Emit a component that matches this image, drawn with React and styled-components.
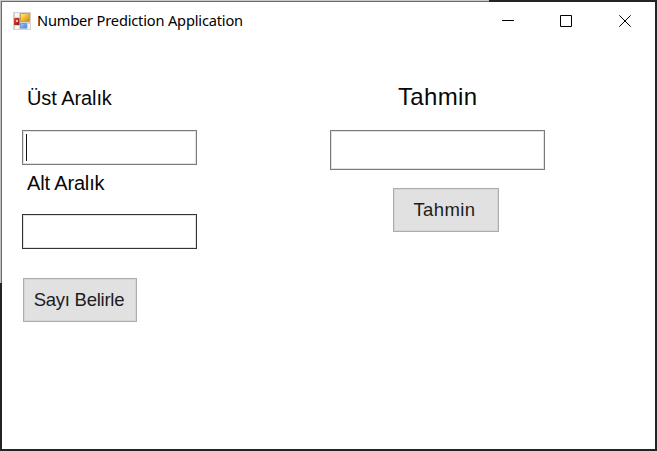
import React from "react";
import styled, { createGlobalStyle } from "styled-components";

const Global = createGlobalStyle`
  * { box-sizing: border-box; }
  body { margin: 0; overflow: hidden; background: #fff; font-kerning: none; }
`;

const Frame = styled.div`
  width: 657px;
  height: 451px;
  padding: 2px;
  display: flex;
  flex-direction: column;
  background:
    linear-gradient(#6b6b6b, #6b6b6b) 1px 1px / 488px 1px no-repeat,
    linear-gradient(#6b6b6b, #6b6b6b) 1px 1px / 1px 282px no-repeat,
    linear-gradient(#c9c9c9, #c9c9c9) 0 0 / 489px 1px no-repeat,
    linear-gradient(#c0c0c0, #c0c0c0) 0 0 / 1px 283px no-repeat,
    #242424;
`;

const TitleBar = styled.header`
  display: flex;
  align-items: center;
  height: 38px;
  padding-left: 11px;
  background: #fff;
`;

const Title = styled.h1`
  flex: 1;
  margin: 0 0 2px 6px;
  font: 400 14.6px/20px "Noto Sans", sans-serif;
  letter-spacing: -0.17px;
  color: #000;
  white-space: nowrap;
`;

const CaptionButton = styled.button`
  display: grid;
  place-items: center;
  width: ${(p) => p.$width || 58}px;
  height: 38px;
  padding: 0;
  border: 0;
  background: transparent;
`;

const Client = styled.main`
  flex: 1;
  display: grid;
  grid-template-columns: 308px 215px;
  align-items: start;
  padding: 45px 0 0 20px;
  background: #fff;
`;

const Column = styled.section`
  display: flex;
  flex-direction: column;
  align-items: flex-start;
`;

const Label = styled.label`
  height: ${(p) => p.$height}px;
  margin: ${(p) => p.$top || 0}px 0 0 ${(p) => p.$indent}px;
  font: 400 ${(p) => p.$size || 20}px/${(p) => p.$line || 26}px "Liberation Sans", sans-serif;
  letter-spacing: ${(p) => p.$spacing || 0}px;
  color: #080808;
  white-space: nowrap;
`;

const Field = styled.div`
  display: flex;
  align-items: center;
  width: ${(p) => p.$width}px;
  height: ${(p) => p.$height}px;
  padding-left: 3px;
  border: 1px solid ${(p) => p.$border};
  box-shadow: inset 0 0 0 1px #e2e2e2;
  background: #fff;
`;

const Caret = styled.span`
  width: 1px;
  height: 27px;
  background: #111;
`;

const PushButton = styled.button`
  width: ${(p) => p.$width}px;
  height: 44px;
  margin: ${(p) => p.$margin};
  padding: 0 ${(p) => p.$nudge}px 0 0;
  border: 1px solid #adadad;
  box-shadow: inset 0 0 0 1px #d6d6d6;
  background: #e1e1e1;
  color: #1c1c1c;
  font: 400 18.5px/24px "Liberation Sans", sans-serif;
  letter-spacing: ${(p) => p.$spacing}px;
  white-space: nowrap;
`;

const AppIcon = () => (
  <svg width="18" height="18" viewBox="0 0 18 18">
    <defs>
      <linearGradient id="gold" x2="1" y2="1">
        <stop stopColor="#fff0a0" /><stop offset=".5" stopColor="#f0bd32" /><stop offset="1" stopColor="#bd850c" />
      </linearGradient>
      <linearGradient id="blue" x2="1" y2="1">
        <stop stopColor="#a9d0fd" /><stop offset="1" stopColor="#3f78dc" />
      </linearGradient>
      <linearGradient id="red" x2="1" y2="1">
        <stop stopColor="#d94a3c" /><stop offset="1" stopColor="#8e1a16" />
      </linearGradient>
    </defs>
    <path d="M0 0h18v18H0z" fill="#d2d2d2" />
    <path d="M2 1h4v4H2zM2 14h4v3H2zM15 12h2v5h-2z" fill="#f6f6f6" />
    <path d="M7.5 1.5h9v8h-9z" fill="url(#gold)" stroke="#cfa044" />
    <path d="M1 6h5.5v7H1z" fill="url(#red)" />
    <path d="M3 8h2v2H3z" fill="#f6c5b8" />
    <path d="M7.5 11.5h6v4.5h-6z" fill="url(#blue)" stroke="#6c9de6" />
  </svg>
);

const glyph = { fill: "none", stroke: "#000" };

export default function App() {
  return (
    <>
      <Global />
      <Frame>
        <TitleBar>
          <AppIcon />
          <Title>Number Prediction Application</Title>
          <CaptionButton aria-label="Minimize">
            <svg width="12" height="12" {...glyph}><path d="M0 5.5h12" /></svg>
          </CaptionButton>
          <CaptionButton aria-label="Maximize">
            <svg width="12" height="12" {...glyph}><path d="M.5.5h11v11H.5z" /></svg>
          </CaptionButton>
          <CaptionButton aria-label="Close" $width={60}>
            <svg width="12" height="12" {...glyph}><path d="M.3.3l11.4 11.4M11.7.3L.3 11.7" /></svg>
          </CaptionButton>
        </TitleBar>
        <Client>
          <Column>
            <Label $height={45} $indent={5} $spacing={-0.08}>Üst Aralık</Label>
            <Field $width={175} $height={35} $border="#7a7a7a"><Caret /></Field>
            <Label $height={44} $top={5} $indent={5} $spacing={-0.15}>Alt Aralık</Label>
            <Field $width={175} $height={35} $border="#333" />
            <PushButton $width={114} $margin="29px 0 0 1px" $nudge={2} $spacing={-0.25}>
              Sayı Belirle
            </PushButton>
          </Column>
          <Column>
            <Label $height={45} $indent={68} $size={24} $line={24} $spacing={0.35}>Tahmin</Label>
            <Field $width={215} $height={40} $border="#7a7a7a" />
            <PushButton $width={106} $margin="18px 0 0 63px" $nudge={3} $spacing={0.4}>
              Tahmin
            </PushButton>
          </Column>
        </Client>
      </Frame>
    </>
  );
}
